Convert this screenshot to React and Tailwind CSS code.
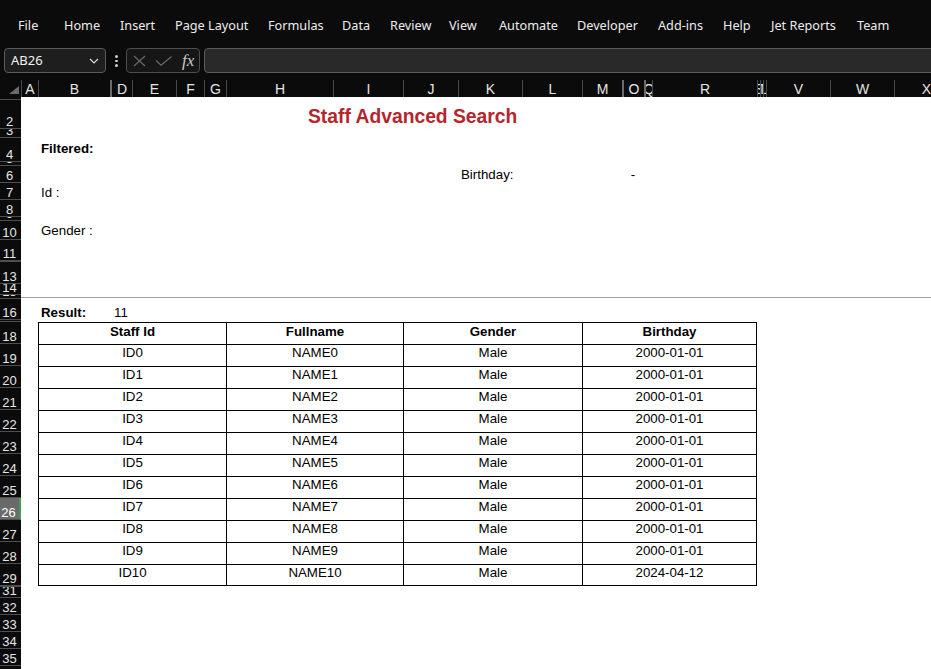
import React from 'react';

const menu = [
    ['File', 'w-[46px]'],
    ['Home', 'w-[56px]'],
    ['Insert', 'w-[55px]'],
    ['Page Layout', 'w-[93px]'],
    ['Formulas', 'w-[74px]'],
    ['Data', 'w-[48px]'],
    ['Review', 'w-[59px]'],
    ['View', 'w-[50px]'],
    ['Automate', 'w-[78px]'],
    ['Developer', 'w-[81px]'],
    ['Add-ins', 'w-[65px]'],
    ['Help', 'w-[48px]'],
    ['Jet Reports', 'w-[86px]'],
    ['Team', 'w-[60px]'],
];

const thin = 'border-l border-[#4a4a4a]';
const thick = 'border-l-2 border-[#6a6a6a]';

const columns = [
    ['A', 'w-[17px]', thin],
    ['B', 'w-[72px]', thin],
    ['D', 'w-[22px]', thick],
    ['E', 'w-[44px]', thin],
    ['F', 'w-[28px]', thin],
    ['G', 'w-[22px]', thin],
    ['H', 'w-[107px]', thin],
    ['I', 'w-[70px]', thin],
    ['J', 'w-[55px]', thin],
    ['K', 'w-[64px]', thin],
    ['L', 'w-[60px]', thin],
    ['M', 'w-[40px]', thin],
    ['O', 'w-[22px]', thick],
    ['Q', 'w-[8px]', thick],
    ['R', 'w-[105px]', thin],
    ['S', 'w-[3px]', thin],
    ['T', 'w-[3px]', thin],
    ['U', 'w-[3px]', thin],
    ['V', 'w-[64px]', thin],
    ['W', 'w-[64px]', thin],
    ['X', 'w-[64px]', thin],
];

const rows = [
    ['1', 'h-[3px]'],
    ['2', 'h-[29px]'],
    ['3', 'h-[9px]'],
    ['4', 'h-[24px]'],
    ['5', 'h-[4px]'],
    ['6', 'h-[17px]'],
    ['7', 'h-[17px]'],
    ['8', 'h-[17px]'],
    ['9', 'h-[4px]'],
    ['10', 'h-[19px]'],
    ['11', 'h-[21px]'],
    ['13', 'h-[23px] border-t'],
    ['14', 'h-[11px]'],
    ['15', 'h-[4px]'],
    ['16', 'h-[21px]'],
    ['17', 'h-[2px]'],
    ['18', 'h-[22px]'],
    ['19', 'h-[22px]'],
    ['20', 'h-[22px]'],
    ['21', 'h-[22px]'],
    ['22', 'h-[22px]'],
    ['23', 'h-[22px]'],
    ['24', 'h-[22px]'],
    ['25', 'h-[22px]'],
    ['26', 'h-[22px]'],
    ['27', 'h-[22px]'],
    ['28', 'h-[22px]'],
    ['29', 'h-[22px]'],
    ['31', 'h-[12px] border-t'],
    ['32', 'h-[17px]'],
    ['33', 'h-[17px]'],
    ['34', 'h-[17px]'],
    ['35', 'h-[17px]'],
    ['36', 'h-[17px]'],
];

const staff = Array.from({ length: 11 }, (_, i) => ({
    id: `ID${i}`,
    name: `NAME${i}`,
    gender: 'Male',
    birthday: i === 10 ? '2024-04-12' : '2000-01-01',
}));

// each cell draws its top and left edge, the outer right/bottom edges are added where needed
const cell = 'h-[22px] border-t border-l border-black flex justify-center whitespace-nowrap';

export default function App() {
    return (
        <div className="w-[931px] h-[669px] overflow-hidden bg-[#0b0b0b] font-['Noto_Sans',sans-serif]">
            {/* ribbon tabs */}
            <div className="h-[40px] flex items-start pt-[16px] pl-[18px] text-[12.7px] leading-[18px] text-[#ececec]">
                {menu.map(([label, w]) => (
                    <div key={label} className={`${w} shrink-0 whitespace-nowrap`}>{label}</div>
                ))}
            </div>

            {/* formula bar */}
            <div className="h-[40px] flex items-start pt-[8px] pl-[4px]">
                <div className="w-[102px] h-[25px] shrink-0 rounded-[4px] border border-[#5a5a5a] bg-[#1e1e1e] flex items-center justify-between pl-[6px] pr-[6px]">
                    <span className="text-[13px] text-[#f2f2f2] leading-none">AB26</span>
                    <svg width="10" height="6" viewBox="0 0 10 6" fill="none">
                        <polyline points="1,1 5,5 9,1" stroke="#d8d8d8" strokeWidth="1.2" />
                    </svg>
                </div>
                <div className="ml-[9px] mt-[7px] w-[3px] flex flex-col gap-[2px] shrink-0">
                    <div className="w-[2.5px] h-[2.5px] rounded-full bg-[#cfcfcf]" />
                    <div className="w-[2.5px] h-[2.5px] rounded-full bg-[#cfcfcf]" />
                    <div className="w-[2.5px] h-[2.5px] rounded-full bg-[#cfcfcf]" />
                </div>
                <div className="ml-[8px] w-[74px] h-[25px] shrink-0 rounded-[4px] border border-[#4e4e4e] bg-[#161616] flex items-center pl-[6px]">
                    <svg width="13" height="12" viewBox="0 0 13 12" fill="none">
                        <path d="M1 1 L12 11 M12 1 L1 11" stroke="#6c6c6c" strokeWidth="1.1" />
                    </svg>
                    <svg className="ml-[9px]" width="17" height="10" viewBox="0 0 17 10" fill="none">
                        <polyline points="1,4.5 6,9.2 16.5,0.5" stroke="#6c6c6c" strokeWidth="1.1" />
                    </svg>
                    <span className="ml-[10px] font-['Liberation_Serif',serif] italic text-[17px] leading-none text-[#c9c9c9]">fx</span>
                </div>
                <div className="ml-[4px] w-[740px] h-[25px] shrink-0 rounded-[4px] border border-[#5a5a5a] bg-[#292929]" />
            </div>

            {/* column headers */}
            <div className="h-[17px] flex font-['Liberation_Sans',Arial,sans-serif] text-[14px] leading-none text-[#e4e4e4]">
                <div className="w-[21px] shrink-0 relative">
                    <svg className="absolute left-[9px] top-[6px]" width="10" height="8" viewBox="0 0 10 8">
                        <polygon points="10,0 10,8 0,8" fill="#6a6a6a" />
                    </svg>
                </div>
                {columns.map(([l, w, b]) => (
                    <div key={l} className={`${w} ${b} shrink-0 overflow-hidden flex items-center justify-center`}>
                        <span className="whitespace-nowrap">{l}</span>
                    </div>
                ))}
            </div>

            <div className="flex font-['Liberation_Sans',Arial,sans-serif]">
                {/* row headers */}
                <div className="w-[21px] shrink-0 flex flex-col">
                    {rows.map(([n, h]) => (
                        <div
                            key={n}
                            className={`${h} border-b border-[#4f4f4f] overflow-hidden flex items-end justify-center pr-[2px] text-[13px] leading-none ${n === '26' ? 'bg-[#6a6a6a] text-white border-r-2 border-r-[#3d9c5e]' : 'text-[#e6e6e6]'}`}
                        >
                            <span>{n}</span>
                        </div>
                    ))}
                </div>

                {/* sheet */}
                <div className="w-[910px] h-[600px] bg-white overflow-hidden grid grid-cols-[17px_72px_22px_44px_28px_22px_107px_70px_55px_64px_60px_40px_22px_8px_105px_3px_3px_3px_64px_64px_64px] grid-rows-[3px_29px_9px_24px_4px_17px_17px_17px_4px_19px_21px_23px_11px_4px_21px_2px_repeat(12,22px)_12px_17px_17px_17px_17px_17px] text-[13.3px] leading-[15px] text-black">
                    <div className="row-start-2 col-start-7 col-span-9 pl-[82px] pt-[6px] text-[19.3px] leading-[22px] font-bold text-[#b5262c] whitespace-nowrap">
                        Staff Advanced Search
                    </div>
                    <div className="row-start-4 col-start-2 col-span-3 pl-[3px] pt-[3px] font-bold whitespace-nowrap">Filtered:</div>
                    <div className="row-start-6 col-start-10 col-span-2 pl-[3px] pt-[1px] whitespace-nowrap">Birthday:</div>
                    <div className="row-start-6 col-start-13 pt-[1px] text-center">-</div>
                    <div className="row-start-7 col-start-2 pl-[3px] pt-[2px] whitespace-nowrap">Id :</div>
                    <div className="row-start-10 col-start-2 pl-[3px] pt-[2px] whitespace-nowrap">Gender :</div>
                    <div className="row-start-14 col-start-1 col-span-21 flex items-center">
                        <div className="h-px w-full bg-[#a3a3a3]" />
                    </div>
                    <div className="row-start-15 col-start-2 pl-[3px] pt-[6px] font-bold whitespace-nowrap">Result:</div>
                    <div className="row-start-15 col-start-3 col-span-2 pl-[4px] pt-[6px]">11</div>

                    {/* result table */}
                    <div className="row-start-17 row-span-12 col-start-2 col-span-14 grid grid-cols-[188px_177px_179px_175px] auto-rows-[22px]">
                        <div className={`${cell} font-bold pt-[1px]`}>Staff Id</div>
                        <div className={`${cell} font-bold pt-[1px]`}>Fullname</div>
                        <div className={`${cell} font-bold pt-[1px]`}>Gender</div>
                        <div className={`${cell} border-r font-bold pt-[1px]`}>Birthday</div>
                        {staff.map((s, i) => (
                            <React.Fragment key={s.id}>
                                <div className={`${cell} ${i === 10 ? 'border-b' : ''}`}>{s.id}</div>
                                <div className={`${cell} ${i === 10 ? 'border-b' : ''}`}>{s.name}</div>
                                <div className={`${cell} ${i === 10 ? 'border-b' : ''}`}>{s.gender}</div>
                                <div className={`${cell} border-r ${i === 10 ? 'border-b' : ''}`}>{s.birthday}</div>
                            </React.Fragment>
                        ))}
                    </div>
                </div>
            </div>
        </div>
    );
}
